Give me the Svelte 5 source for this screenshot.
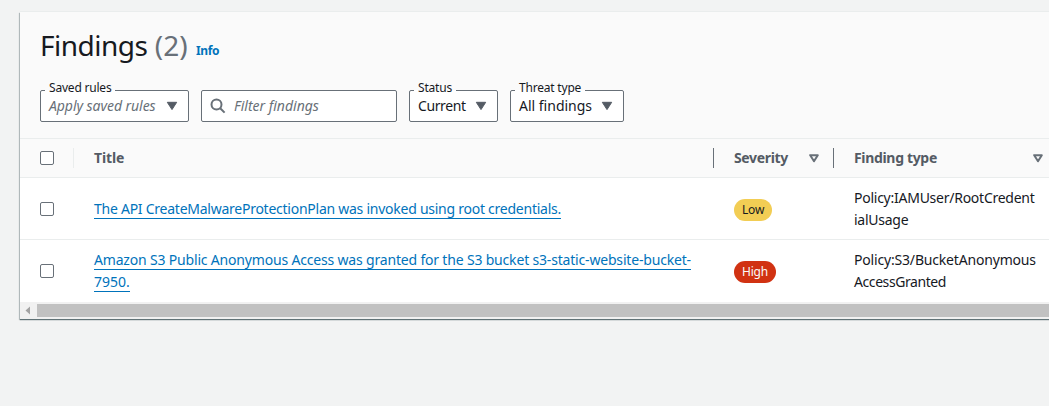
<script>
  const rows = [
    {
      title: ['The API CreateMalwareProtectionPlan was invoked using root credentials.'],
      level: 'Low',
      type: ['Policy:IAMUser/RootCredent', 'ialUsage'],
      fit: 'tight'
    },
    {
      title: [
        'Amazon S3 Public Anonymous Access was granted for the S3 bucket s3-static-website-bucket-',
        '7950.'
      ],
      level: 'High',
      type: ['Policy:S3/BucketAnonymous', 'AccessGranted'],
      fit: 'snug'
    }
  ];
</script>

{#snippet caret()}
  <svg class="caret" viewBox="0 0 12 10"><path d="M1.3 1.3h9.4L6 8.6z" fill="#545b64" stroke="#545b64" stroke-linejoin="round" /></svg>
{/snippet}

{#snippet sort()}
  <svg class="sort" viewBox="0 0 10 9"><path d="M1.2 1.2h7.6L5 7.2z" fill="none" stroke="#687078" stroke-width="2" stroke-linejoin="round" /></svg>
{/snippet}

<main>
  <section class="panel">
    <header>
      <h1>Findings <span class="count">(2)</span></h1>
      <a class="info" href="#info">Info</a>
    </header>

    <div class="filters">
      <fieldset class="saved">
        <legend>Saved rules</legend>
        <span class="value placeholder">Apply saved rules</span>
        {@render caret()}
      </fieldset>
      <div class="search">
        <svg viewBox="0 0 16 16"><circle cx="6.5" cy="6.5" r="5" /><path d="M10.2 10.2l4.4 4.4" /></svg>
        <span class="placeholder">Filter findings</span>
      </div>
      <fieldset class="status">
        <legend>Status</legend>
        <span class="value">Current</span>
        {@render caret()}
      </fieldset>
      <fieldset class="threat">
        <legend>Threat type</legend>
        <span class="value">All findings</span>
        {@render caret()}
      </fieldset>
    </div>

    <div class="table">
      <div class="row head">
        <div class="cell check"><span class="box"></span></div>
        <div class="cell title">Title</div>
        <div class="cell severity"><span class="sev-label">Severity</span>{@render sort()}</div>
        <div class="cell type"><span class="type-label">Finding type</span>{@render sort()}</div>
      </div>
      {#each rows as row}
        <div class="row {row.fit}">
          <div class="cell check"><span class="box"></span></div>
          <div class="cell title">
            <a href="#finding">{#each row.title as line}<span class="line">{line}</span><br />{/each}</a>
          </div>
          <div class="cell severity"><span class="badge {row.level.toLowerCase()}">{row.level}</span></div>
          <div class="cell type">{#each row.type as line}<div class="type-line">{line}</div>{/each}</div>
        </div>
      {/each}
    </div>

    <div class="scroll">
      <svg viewBox="0 0 17 15"><path d="M10 3.5v8L5.5 7.5z" fill="#a3a3a3" /></svg>
      <div class="thumb"></div>
    </div>
  </section>
</main>

<style>
  :global(body) { margin: 0; background: #f2f3f3; overflow: hidden; }
  main {
    box-sizing: border-box;
    height: 406px;
    padding: 12px 0 0 20px;
    overflow: hidden;
    background: #f2f3f3;
    color: #16191f;
    font: 14px/22px "Noto Sans", sans-serif;
  }
  .panel {
    box-sizing: border-box;
    height: 307px;
    width: 1060px;
    background: #fff;
    box-shadow: 0 1px 1px 0 rgba(0, 28, 36, 0.5), -1px 1px 1px 0 rgba(0, 28, 36, 0.2), 0 -1px 0 0 #eaeded;
  }
  header {
    display: flex;
    align-items: flex-start;
    box-sizing: border-box;
    height: 78px;
    padding: 15px 0 0 20px;
    background: #fafafa;
  }
  h1 { margin: 0; width: 156px; font-size: 28px; line-height: 36px; font-weight: 400; letter-spacing: -0.5px; word-spacing: 0.5px; white-space: nowrap; }
  .count { color: #687078; letter-spacing: 0; }
  .info { margin-top: 13px; font-size: 12px; font-weight: 700; letter-spacing: -0.4px; color: #0073bb; text-decoration: none; }
  .filters {
    display: flex;
    gap: 12px;
    box-sizing: border-box;
    height: 48px;
    padding-left: 20px;
    background: #fafafa;
  }
  fieldset, .search {
    position: relative;
    display: flex;
    align-items: center;
    box-sizing: border-box;
    height: 32px;
    min-width: 0;
    margin: 0;
    padding: 0 10px 0 8px;
    border: 1px solid #687078;
    border-radius: 2px;
    background: #fff;
    white-space: nowrap;
  }
  legend {
    position: absolute;
    top: -12px;
    left: 4px;
    padding: 0 4px;
    font-size: 12px;
    line-height: 17px;
    letter-spacing: -0.2px;
    background: linear-gradient(#fafafa 11px, #fff 11px);
  }
  fieldset { justify-content: space-between; }
  .saved { width: 149px; }
  .status { width: 89px; }
  .threat { width: 114px; }
  .value { letter-spacing: -0.4px; }
  .threat .value { letter-spacing: 0; }
  .placeholder { color: #687078; font-style: italic; letter-spacing: 0; }
  .saved .placeholder { letter-spacing: -0.05px; }
  .caret { width: 12px; height: 10px; }
  .search { width: 196px; padding-left: 8px; }
  .search svg { width: 16px; height: 16px; margin-right: 8px; fill: none; stroke: #687078; stroke-width: 2; }
  .row {
    display: grid;
    grid-template-columns: 54px 640px 120px 246px;
    box-sizing: border-box;
    height: 62px;
    border-top: 1px solid #eaeded;
  }
  .head { height: 39px; background: #fafafa; color: #545b64; font-weight: 700; }
  .cell { display: flex; align-items: center; padding-left: 20px; min-width: 0; white-space: nowrap; }
  .head .title, .head .severity, .head .type { position: relative; }
  .head .title::before, .head .severity::before, .head .type::before {
    content: "";
    position: absolute;
    left: -1px;
    top: 9px;
    width: 1px;
    height: 20px;
    background: #687078;
  }
  .head .title::before { background: #eaeded; }
  .head .title { letter-spacing: -0.1px; }
  .sev-label { width: 75px; letter-spacing: -0.35px; }
  .type-label { width: 179px; letter-spacing: -0.33px; }
  .sort { width: 10px; height: 9px; }
  .box { box-sizing: border-box; width: 14px; height: 14px; border: 1px solid #687078; border-radius: 2px; background: #fff; }
  .title a { color: #0073bb; text-decoration: none; }
  .title .line { border-bottom: 1px solid #0073bb; }
  .row:not(.head) .type { flex-direction: column; align-items: flex-start; justify-content: center; }
  .tight .line, .tight .type-line { letter-spacing: -0.253px; }
  .snug .line, .snug .type-line { letter-spacing: -0.18px; }
  .snug .line:last-of-type { letter-spacing: 0; }
  .snug .type-line:last-child { letter-spacing: -0.42px; }
  .badge { margin-top: 2px; padding: 0 8px; border-radius: 11px; font-size: 12px; line-height: 22px; letter-spacing: -0.2px; }
  .low { background: #f2cd54; color: #16191f; }
  .high { background: #d13212; color: #fafafa; }
  .scroll { display: flex; align-items: center; height: 17px; margin-top: 1px; background: #f1f1f1; }
  .scroll svg { width: 17px; height: 15px; }
  .thumb { flex: 1; height: 13px; background: #c1c1c1; }
</style>
